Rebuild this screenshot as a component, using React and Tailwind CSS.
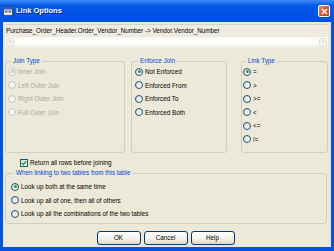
import React from "react";

function Radio({ checked, disabled }) {
  return (
    <span
      className={
        disabled
          ? "w-[8px] h-[8px] rounded-full border border-[#CAC8BB] bg-[#F4F3EE] flex items-center justify-center shrink-0"
          : "w-[8px] h-[8px] rounded-full border border-[#1C5180] bg-gradient-to-br from-[#DCDCD5] to-white flex items-center justify-center shrink-0"
      }
    >
      {checked && (
        <span
          className={
            disabled
              ? "w-[3px] h-[3px] rounded-full bg-[#CAC8BB]"
              : "w-[3px] h-[3px] rounded-full bg-[#21A121]"
          }
        />
      )}
    </span>
  );
}

function RadioRow({ label, checked, disabled }) {
  return (
    <div className="h-[13.5px] flex items-center gap-[2px]">
      <Radio checked={checked} disabled={disabled} />
      <span className={disabled ? "text-[#ACA899]" : "text-black"}>{label}</span>
    </div>
  );
}

function Group({ title, className, children }) {
  return (
    <fieldset className={"border border-[#D0D0BF] rounded-[3px] " + className}>
      <legend className="ml-[3px] px-[2px] leading-[8px] text-[#0046D5]">{title}</legend>
      {children}
    </fieldset>
  );
}

function Button({ children }) {
  return (
    <div className="w-[44px] h-[14px] border border-[#003C74] rounded-[3px] bg-gradient-to-b from-white via-[#F5F4EF] to-[#DCD9CC] flex items-center justify-center text-black">
      {children}
    </div>
  );
}

export default function App() {
  return (
    <div className="w-[334px] h-[251px] bg-[#0352E0] flex flex-col font-['Liberation_Sans',Arial,sans-serif] text-[6.3px]">
      {/* Title bar */}
      <div className="h-[22px] shrink-0 flex items-center bg-gradient-to-b from-[#3D8BF8] via-[#0459E8] via-[25%] to-[#0050DF] pl-[3px] pr-[4px]">
        <svg width="10" height="10" viewBox="0 0 10 10" className="shrink-0">
          <rect x="0.5" y="0.5" width="9" height="9" fill="#E8E8E0" stroke="#3A4A6A" />
          <rect x="1" y="1" width="8" height="2.5" fill="#2A5CC8" />
          <rect x="2" y="4.5" width="2.5" height="2" fill="#5A6A8A" />
          <rect x="5.5" y="4.5" width="2.5" height="2" fill="#5A6A8A" />
        </svg>
        <span className="ml-[3px] text-white font-bold text-[7.5px] leading-none [text-shadow:1px_1px_0_#0A1E8A]">
          Link Options
        </span>
        <div className="ml-auto w-[12px] h-[12px] rounded-[2px] border border-white bg-gradient-to-br from-[#F08A6A] via-[#E0532C] to-[#C8401A] flex items-center justify-center">
          <svg width="7" height="7" viewBox="0 0 7 7">
            <path d="M1 1 L6 6 M6 1 L1 6" stroke="white" strokeWidth="1.6" />
          </svg>
        </div>
      </div>

      {/* Body */}
      <div className="flex-1 mx-[3px] mb-[4px] bg-[#ECE9D8] flex flex-col px-[2px] pt-[2px]">
        {/* Text field */}
        <div className="h-[12px] mr-[1px] border-t border-[#D8D5C6] bg-[#EEECE2] flex items-center pl-[1px] text-black whitespace-nowrap overflow-hidden">
          Purchase_Order_Header.Order_Vendor_Number -&gt; Vendor.Vendor_Number
        </div>
        {/* Scrollbar */}
        <div className="h-[11px] mt-[1px] mr-[1px] bg-gradient-to-b from-[#FAFAF8] via-white to-[#EDEBE3] flex items-center justify-between px-[1px]">
          <div className="w-[8px] h-[9px] rounded-[2px] border border-[#E2E0D6] bg-[#F3F2EC] flex items-center justify-center text-[#C5C2B2] leading-none">
            ‹
          </div>
          <div className="w-[8px] h-[9px] rounded-[2px] border border-[#E2E0D6] bg-[#F3F2EC] flex items-center justify-center text-[#C5C2B2] leading-none">
            ›
          </div>
        </div>

        {/* Groups row */}
        <div className="mt-[9px] flex items-start">
          <Group title="Join Type" className="w-[120px] h-[96px] pl-[2px]">
            <RadioRow label="Inner Join" checked disabled />
            <RadioRow label="Left Outer Join" disabled />
            <RadioRow label="Right Outer Join" disabled />
            <RadioRow label="Full Outer Join" disabled />
          </Group>
          <Group title="Enforce Join" className="ml-[6px] w-[96px] h-[96px] pl-[3px]">
            <RadioRow label="Not Enforced" checked />
            <RadioRow label="Enforced From" />
            <RadioRow label="Enforced To" />
            <RadioRow label="Enforced Both" />
          </Group>
          <Group title="Link Type" className="ml-[14px] w-[87px] h-[96px] pl-[1px]">
            <RadioRow label="=" checked />
            <RadioRow label=">" />
            <RadioRow label=">=" />
            <RadioRow label="<" />
            <RadioRow label="<=" />
            <RadioRow label="!=" />
          </Group>
        </div>

        {/* Checkbox */}
        <div className="mt-[5px] h-[10px] flex items-center pl-[15px] gap-[2px]">
          <span className="w-[8px] h-[8px] border border-[#1C5180] bg-gradient-to-br from-[#DCDCD5] to-white flex items-center justify-center">
            <svg width="6" height="6" viewBox="0 0 6 6">
              <path d="M0.8 3 L2.4 4.6 L5.2 1.2" stroke="#21A121" strokeWidth="1.4" fill="none" />
            </svg>
          </span>
          <span className="text-black">Return all rows before joining</span>
        </div>

        {/* Second group */}
        <Group
          title="When linking to two tables from this table"
          className="mt-[1px] mr-[2px] h-[55px] pl-[5px] pt-[3px]"
        >
          <RadioRow label="Look up both at the same time" checked />
          <RadioRow label="Look up all of one, then all of others" />
          <RadioRow label="Look up all the combinations of the two tables" />
        </Group>

        {/* Buttons */}
        <div className="mt-[7px] flex justify-center gap-[3px] pr-[3px]">
          <Button>OK</Button>
          <Button>Cancel</Button>
          <Button>Help</Button>
        </div>
      </div>
    </div>
  );
}
